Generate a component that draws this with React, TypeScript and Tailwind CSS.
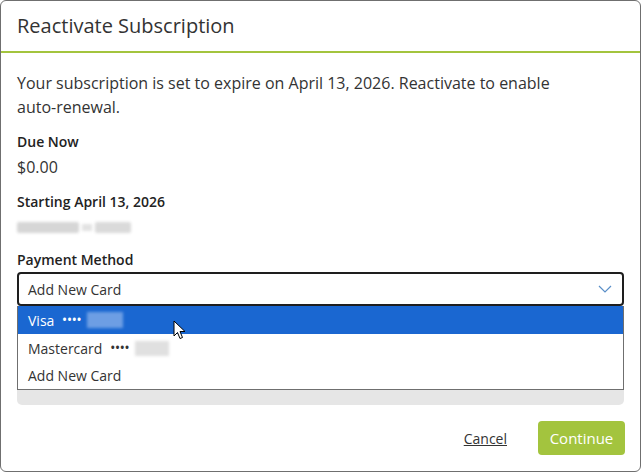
import React from "react";

function Chevron() {
  return (
    <svg width="14" height="8" viewBox="0 0 14 8" fill="none">
      <path d="M1 1 L7 7 L13 1" stroke="#5a8fc8" strokeWidth="1.2" />
    </svg>
  );
}

function Cursor() {
  return (
    <svg width="14" height="22" viewBox="0 0 14 22" className="absolute left-[173px] top-[320px]">
      <path d="M1 1 L1 16 L4.5 12.5 L7 18.5 L9.5 17.5 L7 11.5 L12 11.5 Z" fill="#ffffff" stroke="#000000" strokeWidth="1" strokeLinejoin="round" />
    </svg>
  );
}

export default function App() {
  return (
    <div className="relative w-[642px] h-[473px] bg-white" style={{ fontFamily: '"Open Sans", sans-serif' }}>
      <div className="w-[641px] h-[472px] border border-[#6f6f6f] rounded-[6px] flex flex-col text-[#333333]">
        <div className="h-[52px] flex items-center px-[16px] border-b-2 border-[#a3c43e]">
          <div className="text-[20px] leading-[26px] text-[#333333]">Reactivate Subscription</div>
        </div>
        <div className="px-[16px] pt-[18px] flex flex-col">
          <p className="text-[16px] leading-[24px] pr-[40px]">
            Your subscription is set to expire on April 13, 2026. Reactivate to enable auto-renewal.
          </p>
          <div className="mt-[13px] text-[14px] leading-[20px] font-semibold text-[#222222]">Due Now</div>
          <div className="mt-[3px] text-[16px] leading-[24px]">$0.00</div>
          <div className="mt-[13px] text-[14px] leading-[20px] font-semibold text-[#222222]">Starting April 13, 2026</div>
          <div className="mt-[3px] h-[24px] flex items-center gap-[3px] blur-[1.8px]">
            <div className="w-[62px] h-[11px] bg-[#d6d6d6] rounded-[2px]" />
            <div className="w-[10px] h-[7px] bg-[#e2e2e2]" />
            <div className="w-[36px] h-[11px] bg-[#dadada] rounded-[2px]" />
          </div>
          <div className="mt-[11px] text-[14px] leading-[20px] font-semibold text-[#222222]">Payment Method</div>
          <div className="mt-[2px] relative">
            <div className="h-[34px] border-2 border-[#1e1e1e] rounded-[4px] flex items-center justify-between pl-[9px] pr-[10px] text-[14px]">
              <span>Add New Card</span>
              <Chevron />
            </div>
            <div className="relative">
              <div className="h-[99px] bg-[#e6e6e6] rounded-b-[5px]" />
              <div className="absolute left-0 right-0 top-0 border border-[#6f6f6f] border-t-0 bg-white text-[14px]">
                <div className="h-[28px] bg-[#1a67d1] text-white flex items-center pl-[10px]">
                  <span>Visa</span>
                  <span className="ml-[8px] tracking-[0.3px] text-[12px] font-semibold">••••</span>
                  <span className="ml-[5px] w-[36px] h-[16px] bg-[#6d9ee4] blur-[1.5px]" />
                </div>
                <div className="h-[28px] flex items-center pl-[10px]">
                  <span>Mastercard</span>
                  <span className="ml-[8px] tracking-[0.3px] text-[12px] font-semibold">••••</span>
                  <span className="ml-[5px] w-[34px] h-[15px] bg-[#e0e0e0] blur-[1.5px]" />
                </div>
                <div className="h-[27px] flex items-center pl-[10px]">Add New Card</div>
              </div>
            </div>
          </div>
        </div>
        <div className="mt-auto flex items-center justify-end gap-[31px] px-[15px] pb-[16px]">
          <span className="text-[14px] underline text-[#333333]">Cancel</span>
          <button className="h-[34px] w-[87px] rounded-[4px] bg-[#a3c43e] text-white text-[15px]">Continue</button>
        </div>
      </div>
      <Cursor />
    </div>
  );
}
